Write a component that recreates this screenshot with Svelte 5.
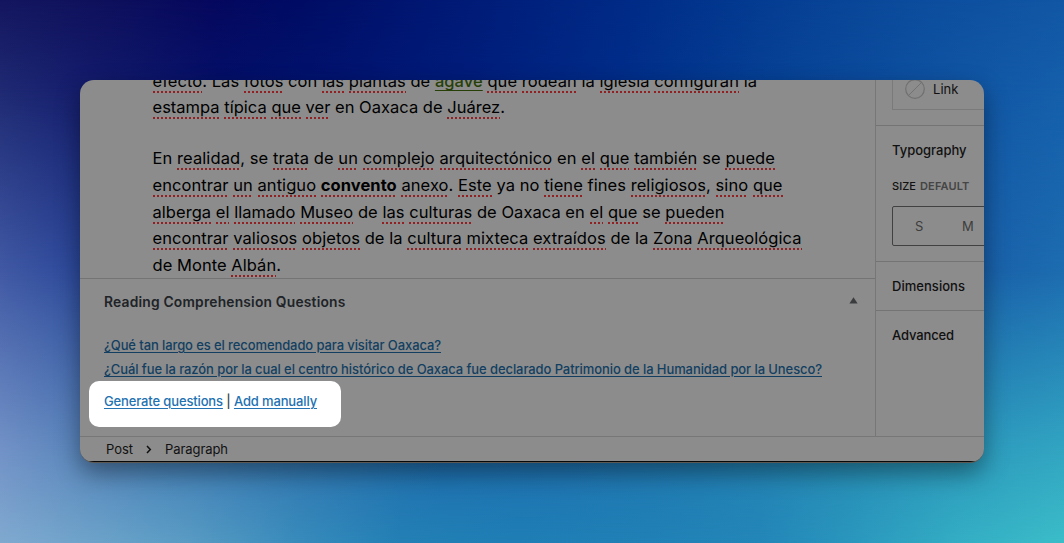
<script>
  // Words wrapped in [ ] carry the spell-check underline.
  const paragraphs = [
    [
      { text: '[efecto]. Las [fotos] con [las] [plantas] de {agave} [que] [rodean] la [iglesia] [configuran] la', width: 604.5 },
      { text: '[estampa] [típica] [que] [ver] en Oaxaca de [Juárez].', width: 352.5 },
    ],
    [
      { text: 'En [realidad], se [trata] de [un] [complejo] [arquitectónico] en [el] [que] [también] se [puede]', width: 622.5 },
      { text: '[encontrar] [un] [antiguo] <convento> [anexo]. [Este] ya no [tiene] fines [religiosos], [sino] [que]', width: 630 },
      { text: '[alberga] [el] [llamado] [Museo] de [las] [culturas] de Oaxaca en [el] [que] se [pueden]', width: 572 },
      { text: '[encontrar] [valiosos] [objetos] de la [cultura] [mixteca] [extraídos] de la [Zona] [Arqueológica]', width: 649 },
      { text: 'de Monte [Albán].', width: 128.5 },
    ],
  ];

  const kinds = { '[': 'spell', '{': 'link', '<': 'spell strong' };
  const parse = (text) =>
    text
      .split(/(\[[^\]]+\]|\{[^}]+\}|<[^>]+>)/)
      .filter(Boolean)
      .map((t) => (kinds[t[0]] ? { cls: kinds[t[0]], t: t.slice(1, -1) } : { cls: '', t }));

  // Spreads the letters so that the text fills the given measure.
  function fit(node, width) {
    const natural = node.getBoundingClientRect().width;
    node.style.letterSpacing = `${(width - natural) / node.textContent.length}px`;
  }
</script>

<div class="stage">
  <div class="wash r1"></div>
  <div class="wash r2"></div>
  <div class="wash r3"></div>
  <div class="wash r4"></div>
  <div class="wash r5"></div>

  <div class="window">
    <div class="body">
      <main>
        <article>
          {#each paragraphs as lines}
            <div class="para">
              {#each lines as line}
                <div class="line"><span use:fit={line.width}>{#each parse(line.text) as part}<span class={part.cls}>{part.t}</span>{/each}</span></div>
              {/each}
            </div>
          {/each}
        </article>
        <section>
          <header>
            <h2><span use:fit={241.5}>Reading Comprehension Questions</span></h2>
            <svg width="9" height="7" viewBox="0 0 9 7"><path d="M4.5 .3 8.6 6.6H.4z" fill="#3a3c3e" /></svg>
          </header>
          <div class="q"><a href="#q1" use:fit={337}>¿Qué tan largo es el recomendado para visitar Oaxaca?</a></div>
          <div class="q"><a href="#q2" use:fit={718}>¿Cuál fue la razón por la cual el centro histórico de Oaxaca fue declarado Patrimonio de la Humanidad por la Unesco?</a></div>
          <div class="actions"><span use:fit={213}><a href="#generate">Generate questions</a> | <a href="#add">Add manually</a></span></div>
        </section>
      </main>
      <aside>
        <div class="panel color">
          <div class="linkbox">
            <svg width="20" height="20" viewBox="0 0 20 20" fill="none" stroke="#707070"><circle cx="10" cy="10" r="9.3" stroke-width="1.2" /><path d="M3.6 16.4 16.4 3.6" stroke-width=".9" /></svg>
            <span use:fit={25.5}>Link</span>
          </div>
        </div>
        <div class="panel typo">
          <h3><span use:fit={74.5}>Typography</span></h3>
          <div class="size"><span use:fit={24}>SIZE</span><span class="muted" use:fit={49.5}>DEFAULT</span></div>
          <div class="sizes"><span>S</span><span>M</span></div>
        </div>
        <div class="panel short"><h3><span use:fit={73}>Dimensions</span></h3></div>
        <div class="panel short last"><h3><span use:fit={62}>Advanced</span></h3></div>
      </aside>
    </div>
    <footer>
      <span use:fit={27}>Post</span>
      <svg width="6" height="9" viewBox="0 0 6 9"><path d="M1 1 4.3 4.5 1 8" fill="none" stroke="#101010" stroke-width="1.5" /></svg>
      <span use:fit={63}>Paragraph</span>
    </footer>
  </div>
</div>

<style>
  :global(body) { margin: 0; }
  .stage {
    width: 1064px;
    height: 543px;
    display: grid;
    overflow: hidden;
    font-family: Inter, "Liberation Sans", sans-serif;
    font-size: 13px;
    color: #111;
  }
  .wash, .window { grid-area: 1 / 1; }
  .r1 { background: linear-gradient(90deg, #14165f 0, #0e105c 110px, #06085e 210px, #000c64 300px, #001570 400px, #001f7c 510px, #002a86 620px, #043c92 760px, #0c4c9d 910px, #1157a5 1064px); }
  .r2 { background: linear-gradient(90deg, #1f2a73 0, #141c6c 90px, #041068 220px, #001470 340px, #001d7b 470px, #002d89 620px, #064094 760px, #0d4f9f 900px, #155fab 1064px); mask-image: linear-gradient(transparent 0, #000 90px); }
  .r3 { background: linear-gradient(90deg, #4159a4 0, #2c499a 80px, #103f92 300px, #1960a9 980px, #1d6cb0 1064px); mask-image: linear-gradient(transparent 90px, #000 270px); }
  .r4 { background: linear-gradient(90deg, #7292c7 0, #5a86bb 80px, #4680b8 160px, #3275b0 300px, #1e6dae 440px, #1f70af 560px, #217bb1 700px, #278db5 850px, #2c99bc 960px, #32a5c2 1064px); mask-image: linear-gradient(transparent 270px, #000 450px); }
  .r5 { background: linear-gradient(90deg, #80a9cf 0, #6ba2c9 100px, #589bc3 190px, #378bbb 300px, #2380b5 400px, #1f7eb5 520px, #2081b6 650px, #2386b8 760px, #2a96bd 850px, #34aec4 960px, #3bbdc8 1064px); mask-image: linear-gradient(transparent 450px, #000 543px); }

  .window {
    position: relative;
    box-sizing: border-box;
    width: 904px;
    height: 383px;
    margin: 80px 0 0 80px;
    border-bottom: 1px solid #5d5852;
    border-radius: 14px;
    overflow: hidden;
    background: #8c8c8c;
    display: flex;
    flex-direction: column;
    box-shadow: 0 10px 24px rgba(0, 0, 0, .4);
  }
  .body { height: 356px; display: flex; border-bottom: 1px solid #777; }
  main { width: 795px; display: flex; flex-direction: column; }
  article {
    height: 199px;
    padding-left: 72.5px;
    overflow: hidden;
    box-sizing: border-box;
    border-bottom: 1px solid #747474;
    font-size: 16.5px;
    color: #000;
    white-space: nowrap;
  }
  .line { height: 26.7px; line-height: 26.7px; }
  .para:first-child { margin: -11.7px 0 24.9px; }
  .para:first-child .line { height: 26.1px; line-height: 26.1px; }
  .spell {
    padding-bottom: 2px;
    background: repeating-linear-gradient(90deg, #922023 0 2px, transparent 2px 4px) left bottom / 100% 2px no-repeat;
  }
  .strong { font-weight: 700; }
  .link { color: #263f06; font-weight: 500; text-decoration: underline; text-decoration-thickness: 1px; text-underline-offset: 3px; }

  section { flex: 1; padding: 0 16px 0 24px; white-space: nowrap; }
  header { height: 46px; display: flex; align-items: center; justify-content: space-between; }
  header svg { margin: -4px 1px 0 0; }
  h2, h3 { margin: 0; }
  h2 { font-size: 13.8px; font-weight: 600; color: #202327; }
  .q { height: 24px; line-height: 24px; }
  header + .q { margin-top: 8px; }
  .q a { color: #123f61; }
  a { color: #2271b1; text-decoration: underline; text-decoration-thickness: 1px; text-underline-offset: 2px; }
  .q, .actions { font-weight: 500; }
  .actions {
    width: 252.5px;
    height: 46.5px;
    margin: -.4px 0 0 -15.5px;
    padding-left: 15.5px;
    box-sizing: border-box;
    border-radius: 10px;
    background: #fff;
    line-height: 40.6px;
    color: #3c434a;
  }

  aside { flex: 1; border-left: 1px solid #777; overflow: hidden; white-space: nowrap; }
  .panel { box-sizing: border-box; padding-left: 16px; border-bottom: 1px solid #747474; }
  .color { height: 46px; }
  .linkbox {
    height: 30px;
    box-sizing: border-box;
    padding-left: 12px;
    border: solid #7a7a7a;
    border-width: 0 0 1px 1px;
    display: flex;
    gap: 8px;
  }
  .linkbox svg { margin-top: -1px; }
  .linkbox span { line-height: 19px; align-self: flex-start; }
  h3 { font-size: 13px; font-weight: 550; line-height: 49px; color: #111; }
  .typo { height: 136px; }
  .size { display: flex; gap: 4px; font-size: 11px; font-weight: 500; line-height: 16px; margin-top: 3px; }
  .size span { align-self: flex-start; }
  .size .muted { color: #454545; font-weight: 600; }
  .sizes {
    display: flex;
    box-sizing: border-box;
    width: 200px;
    height: 40px;
    margin-top: 12px;
    border: 1px solid #414141;
    border-radius: 2px;
    padding-left: 2px;
    line-height: 39px;
    color: #3d3d3d;
  }
  .sizes span { width: 48.5px; text-align: center; }
  .short { height: 49px; }
  .last { border-bottom: 0; }

  footer {
    height: 24px;
    padding-left: 26px;
    display: flex;
    align-items: center;
    border-bottom: 1px solid #080808;
    white-space: nowrap;
  }
  footer svg { margin: 0 13px; }
</style>
